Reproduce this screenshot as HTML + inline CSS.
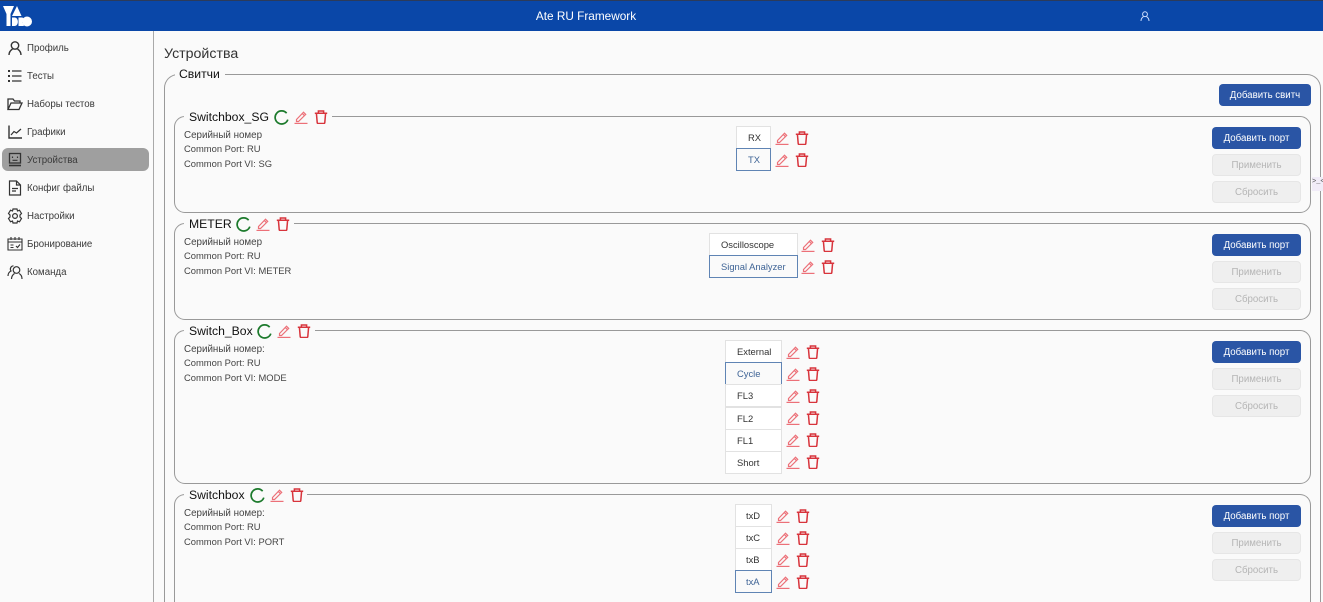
<!DOCTYPE html>
<html><head><meta charset="utf-8">
<style>
html,body{margin:0;padding:0;width:1323px;height:602px;overflow:hidden;background:#fafafa;font-family:"Liberation Sans",sans-serif;color:#333}
#w{position:relative;width:1323px;height:602px;overflow:hidden;background:#fafafa}
.a{position:absolute}
#top{left:0;top:0;width:1323px;height:31px;background:#0a47a8;border-top:1px solid #2c3b5a;box-sizing:border-box}
#side{left:153px;top:31px;width:1px;height:571px;background:#a9a9a9}
.nav{left:27px;font-size:9.7px;color:#3a3a3a;line-height:14px;white-space:nowrap}
.box{border:1px solid #999;box-sizing:border-box;border-radius:11px}
.leg{background:#fafafa;height:16px}
.lt{font-size:12.2px;color:#111;line-height:16px;white-space:nowrap}
.inf{font-size:9.4px;color:#444;line-height:14px;white-space:nowrap}
.inf.c{font-size:9.8px}
.port{box-sizing:border-box;height:23px;border:1px solid #e2e2e2;background:#fff;font-size:9.4px;line-height:22px;padding-left:11px;color:#333;white-space:nowrap}
.port.on{border-color:#5f84b4;color:#3f6496;background:#fafafa}
.btn{box-sizing:border-box;width:89px;height:22px;border-radius:4px;background:#2a55a5;color:#fff;font-size:9.7px;line-height:23px;text-align:center}
.btn.d{background:#efefef;color:#b5b5b5;border:1px solid #e6e6e6;line-height:21px}
svg{position:absolute;fill:none}
</style></head><body>
<div id="w">
<svg width="0" height="0" style="position:absolute">
<defs>
<symbol id="e" viewBox="0 0 14 14"><path d="M2.500 9.500 9.500 2.200l2.200 2.200-7.200 7.100H2.500zM8.300 3.500l2.200 2.200" fill="none" stroke="#ec7078" stroke-width="1.200"/><path d="M.5 13.400h13" stroke="#ec7078" stroke-width="1.200"/></symbol>
<symbol id="t" viewBox="0 0 14 14"><path d="M.8 3.200h12.400M4.400 3.200V1h5.200v2.200M2.400 3.200l.8 9.300q.1 1 1 1h5.600q.9 0 1-1l.8-9.300" fill="none" stroke="#d8343c" stroke-width="1.500"/></symbol>
<symbol id="r" viewBox="0 0 14 14"><path d="M11.800 3A6.100 6.100 0 1 0 12.900 9" fill="none" stroke="#1c7a2c" stroke-width="1.600"/></symbol>
</defs></svg>

<div id="top" class="a"></div>
<svg style="left:0;top:0" width="36" height="31" viewBox="0 0 36 31"><path d="M3 6h11l-3.500 8V26H6.500V14z" fill="#fff"/><path d="M12 16l5-10 4.500 10z" fill="#fff"/><path d="M12 17.500h2.500c4.500 0 4.500 8.500 0 8.500H12z" fill="#fff"/><path d="M18.500 17.500h3.500c2.500 0 2.500 4.500 0 4.500l2 4h-5.500z" fill="#fff"/><circle cx="27" cy="21.500" r="5" fill="#fff"/></svg>
<div class="a" style="left:436px;top:9px;width:300px;text-align:center;color:#fff;font-size:11.800px;line-height:15px">Ate RU Framework</div>
<svg style="left:1140px;top:11px" width="10" height="11" viewBox="0 0 10 11"><circle cx="5" cy="3.200" r="2.400" stroke="#cfe0ff" stroke-width="1"/><path d="M1 10c0-3 2-4 2.500-4.500M9 10c0-3-2-4-2.500-4.500" stroke="#cfe0ff" stroke-width="1"/></svg>

<div id="side" class="a"></div>
<div class="a" style="left:2px;top:148px;width:147px;height:23px;background:#9f9f9f;border-radius:6px"></div>

<svg style="left:7px;top:40px" width="16" height="16" viewBox="0 0 16 16"><circle cx="8" cy="5.500" r="3.700" stroke="#333" stroke-width="1.400"/><path d="M2 15c0-3.500 2-5 3.500-6M14 15c0-3.500-2-5-3.500-6" stroke="#333" stroke-width="1.400"/></svg>
<svg style="left:7px;top:68px" width="16" height="16" viewBox="0 0 16 16"><path d="M5 3h9.500M5 8h9.500M5 13h9.500" stroke="#333" stroke-width="1.300"/><path d="M1 3h2M1 8h2M1 13h2" stroke="#333" stroke-width="2" stroke-dasharray="2 .5"/></svg>
<svg style="left:7px;top:96px" width="16" height="16" viewBox="0 0 16 16"><path d="M1 13.500V3h5l1.500 2H13v2M1 13.500h11L15 7H4z" stroke="#333" stroke-width="1.300"/></svg>
<svg style="left:7px;top:124px" width="16" height="16" viewBox="0 0 16 16"><path d="M2 1.500V14h13" stroke="#333" stroke-width="1.400"/><path d="M4 11l3-3.500 2.500 1.500L14 5" stroke="#333" stroke-width="1.200"/></svg>
<svg style="left:7px;top:152px" width="16" height="16" viewBox="0 0 16 16"><rect x="2.500" y="1.500" width="11" height="9.500" stroke="#333" stroke-width="1.300"/><path d="M2 13.500h12" stroke="#333" stroke-width="1.600"/><path d="M5.500 4.500v1.500M10.500 4.500v1.500M5.500 8.300h5" stroke="#333" stroke-width="1.200"/></svg>
<svg style="left:7px;top:180px" width="16" height="16" viewBox="0 0 16 16"><path d="M2.500 1h7l4 4v10h-11zM9.500 1v4h4M5 8.500h6M5 11h4" stroke="#333" stroke-width="1.200"/></svg>
<svg style="left:7px;top:208px" width="16" height="16" viewBox="0 0 16 16"><path d="M6 1h4l.5 2 2-.8 2 3.300-1.500 1.500v2l1.500 1.500-2 3.300-2-.8-.5 2H6l-.5-2-2 .8-2-3.300L3 9V7L1.500 5.500l2-3.300 2 .8z" stroke="#333" stroke-width="1.200"/><circle cx="8" cy="8" r="2.400" stroke="#333" stroke-width="1.200"/></svg>
<svg style="left:7px;top:236px" width="16" height="16" viewBox="0 0 16 16"><path d="M1 3h14v11H1zM1 6h14M4 1v3M8 1v3M12 1v3M3.500 9h3M3.500 11.500h3M9 10l1.500 1.500L13 8.500" stroke="#333" stroke-width="1.100"/></svg>
<svg style="left:7px;top:264px" width="16" height="16" viewBox="0 0 16 16"><circle cx="9.500" cy="6" r="3.300" stroke="#333" stroke-width="1.200"/><path d="M4.500 15c0-3 1.500-4.500 3-5.500M15 15c0-3-1-4.500-3-5.500M6.500 1.800A3.300 3.300 0 0 0 4 7c-2 1-3 3-3 5" stroke="#333" stroke-width="1.200"/></svg>

<div class="a nav" style="top:42px">Профиль</div>
<div class="a nav" style="top:70px">Тесты</div>
<div class="a nav" style="top:98px">Наборы тестов</div>
<div class="a nav" style="top:126px">Графики</div>
<div class="a nav" style="top:154px">Устройства</div>
<div class="a nav" style="top:182px">Конфиг файлы</div>
<div class="a nav" style="top:210px">Настройки</div>
<div class="a nav" style="top:238px">Бронирование</div>
<div class="a nav" style="top:266px">Команда</div>

<div class="a" style="left:164px;top:45px;font-size:14.200px;line-height:19px;color:#333">Устройства</div>

<div class="a box" style="left:164px;top:74px;width:1157px;height:528px;border-radius:14px 14px 0 0;border-bottom:0"></div>
<div class="a leg" style="left:175px;top:66px;width:50px"></div>
<div class="a lt" style="left:179px;top:66px">Свитчи</div>
<div class="a btn" style="left:1219px;top:84px;width:92px;line-height:24px">Добавить свитч</div>

<!-- group 1 -->
<div class="a box" style="left:174px;top:116px;width:1137px;height:97px"></div>
<div class="a leg" style="left:184px;top:108px;width:148px"></div>
<div class="a lt" style="left:189px;top:109px">Switchbox_SG</div>
<svg style="left:274px;top:110px" width="15" height="15"><use href="#r"/></svg>
<svg style="left:294px;top:110px" width="14" height="14"><use href="#e"/></svg>
<svg style="left:314px;top:110px" width="14" height="14"><use href="#t"/></svg>
<div class="a inf c" style="left:184px;top:129px">Серийный номер</div>
<div class="a inf" style="left:184px;top:142px">Common Port: RU</div>
<div class="a inf" style="left:184px;top:157px">Common Port VI: SG</div>
<div class="a port" style="left:736px;top:126px;width:35px">RX</div>
<div class="a port on" style="left:736px;top:148px;width:35px">TX</div>
<svg style="left:775px;top:131px" width="14" height="14"><use href="#e"/></svg>
<svg style="left:795px;top:131px" width="14" height="14"><use href="#t"/></svg>
<svg style="left:775px;top:153px" width="14" height="14"><use href="#e"/></svg>
<svg style="left:795px;top:153px" width="14" height="14"><use href="#t"/></svg>
<div class="a btn" style="left:1212px;top:127px">Добавить порт</div>
<div class="a btn d" style="left:1212px;top:154px">Применить</div>
<div class="a btn d" style="left:1212px;top:181px">Сбросить</div>

<!-- group 2 -->
<div class="a box" style="left:174px;top:223px;width:1137px;height:97px"></div>
<div class="a leg" style="left:184px;top:215px;width:110px"></div>
<div class="a lt" style="left:189px;top:216px">METER</div>
<svg style="left:236px;top:217px" width="15" height="15"><use href="#r"/></svg>
<svg style="left:256px;top:217px" width="14" height="14"><use href="#e"/></svg>
<svg style="left:276px;top:217px" width="14" height="14"><use href="#t"/></svg>
<div class="a inf c" style="left:184px;top:236px">Серийный номер</div>
<div class="a inf" style="left:184px;top:249px">Common Port: RU</div>
<div class="a inf" style="left:184px;top:264px">Common Port VI: METER</div>
<div class="a port" style="left:709px;top:233px;width:89px">Oscilloscope</div>
<div class="a port on" style="left:709px;top:255px;width:89px">Signal Analyzer</div>
<svg style="left:801px;top:238px" width="14" height="14"><use href="#e"/></svg>
<svg style="left:821px;top:238px" width="14" height="14"><use href="#t"/></svg>
<svg style="left:801px;top:260px" width="14" height="14"><use href="#e"/></svg>
<svg style="left:821px;top:260px" width="14" height="14"><use href="#t"/></svg>
<div class="a btn" style="left:1212px;top:234px">Добавить порт</div>
<div class="a btn d" style="left:1212px;top:261px">Применить</div>
<div class="a btn d" style="left:1212px;top:288px">Сбросить</div>

<!-- group 3 -->
<div class="a box" style="left:174px;top:330px;width:1137px;height:154px"></div>
<div class="a leg" style="left:184px;top:322px;width:131px"></div>
<div class="a lt" style="left:189px;top:323px">Switch_Box</div>
<svg style="left:257px;top:324px" width="15" height="15"><use href="#r"/></svg>
<svg style="left:277px;top:324px" width="14" height="14"><use href="#e"/></svg>
<svg style="left:297px;top:324px" width="14" height="14"><use href="#t"/></svg>
<div class="a inf c" style="left:184px;top:343px">Серийный номер:</div>
<div class="a inf" style="left:184px;top:356px">Common Port: RU</div>
<div class="a inf" style="left:184px;top:371px">Common Port VI: MODE</div>
<div class="a port" style="left:725px;top:340px;width:57px">External</div>
<div class="a port on" style="left:725px;top:362px;width:57px">Cycle</div>
<div class="a port" style="left:725px;top:384px;width:57px">FL3</div>
<div class="a port" style="left:725px;top:407px;width:57px">FL2</div>
<div class="a port" style="left:725px;top:429px;width:57px">FL1</div>
<div class="a port" style="left:725px;top:451px;width:57px">Short</div>
<svg style="left:786px;top:345px" width="14" height="14"><use href="#e"/></svg>
<svg style="left:806px;top:345px" width="14" height="14"><use href="#t"/></svg>
<svg style="left:786px;top:367px" width="14" height="14"><use href="#e"/></svg>
<svg style="left:806px;top:367px" width="14" height="14"><use href="#t"/></svg>
<svg style="left:786px;top:389px" width="14" height="14"><use href="#e"/></svg>
<svg style="left:806px;top:389px" width="14" height="14"><use href="#t"/></svg>
<svg style="left:786px;top:411px" width="14" height="14"><use href="#e"/></svg>
<svg style="left:806px;top:411px" width="14" height="14"><use href="#t"/></svg>
<svg style="left:786px;top:433px" width="14" height="14"><use href="#e"/></svg>
<svg style="left:806px;top:433px" width="14" height="14"><use href="#t"/></svg>
<svg style="left:786px;top:455px" width="14" height="14"><use href="#e"/></svg>
<svg style="left:806px;top:455px" width="14" height="14"><use href="#t"/></svg>
<div class="a btn" style="left:1212px;top:341px">Добавить порт</div>
<div class="a btn d" style="left:1212px;top:368px">Применить</div>
<div class="a btn d" style="left:1212px;top:395px">Сбросить</div>

<!-- group 4 -->
<div class="a box" style="left:174px;top:494px;width:1137px;height:108px;border-radius:11px 11px 0 0;border-bottom:0"></div>
<div class="a leg" style="left:184px;top:486px;width:123px"></div>
<div class="a lt" style="left:189px;top:487px">Switchbox</div>
<svg style="left:250px;top:488px" width="15" height="15"><use href="#r"/></svg>
<svg style="left:270px;top:488px" width="14" height="14"><use href="#e"/></svg>
<svg style="left:290px;top:488px" width="14" height="14"><use href="#t"/></svg>
<div class="a inf c" style="left:184px;top:507px">Серийный номер:</div>
<div class="a inf" style="left:184px;top:520px">Common Port: RU</div>
<div class="a inf" style="left:184px;top:535px">Common Port VI: PORT</div>
<div class="a port" style="left:735px;top:504px;width:37px;padding-left:10px">txD</div>
<div class="a port" style="left:735px;top:526px;width:37px;padding-left:10px">txC</div>
<div class="a port" style="left:735px;top:548px;width:37px;padding-left:10px">txB</div>
<div class="a port on" style="left:735px;top:570px;width:37px;padding-left:10px">txA</div>
<svg style="left:776px;top:509px" width="14" height="14"><use href="#e"/></svg>
<svg style="left:796px;top:509px" width="14" height="14"><use href="#t"/></svg>
<svg style="left:776px;top:531px" width="14" height="14"><use href="#e"/></svg>
<svg style="left:796px;top:531px" width="14" height="14"><use href="#t"/></svg>
<svg style="left:776px;top:553px" width="14" height="14"><use href="#e"/></svg>
<svg style="left:796px;top:553px" width="14" height="14"><use href="#t"/></svg>
<svg style="left:776px;top:575px" width="14" height="14"><use href="#e"/></svg>
<svg style="left:796px;top:575px" width="14" height="14"><use href="#t"/></svg>
<div class="a btn" style="left:1212px;top:505px">Добавить порт</div>
<div class="a btn d" style="left:1212px;top:532px">Применить</div>
<div class="a btn d" style="left:1212px;top:559px">Сбросить</div>

<div class="a" style="left:1312px;top:177px;width:11px;height:14px;background:#f1ecf8;font-size:7px;line-height:10px;color:#555;font-family:'Liberation Mono',monospace;overflow:hidden">&gt;_&lt;</div>
</div>
</body></html>
